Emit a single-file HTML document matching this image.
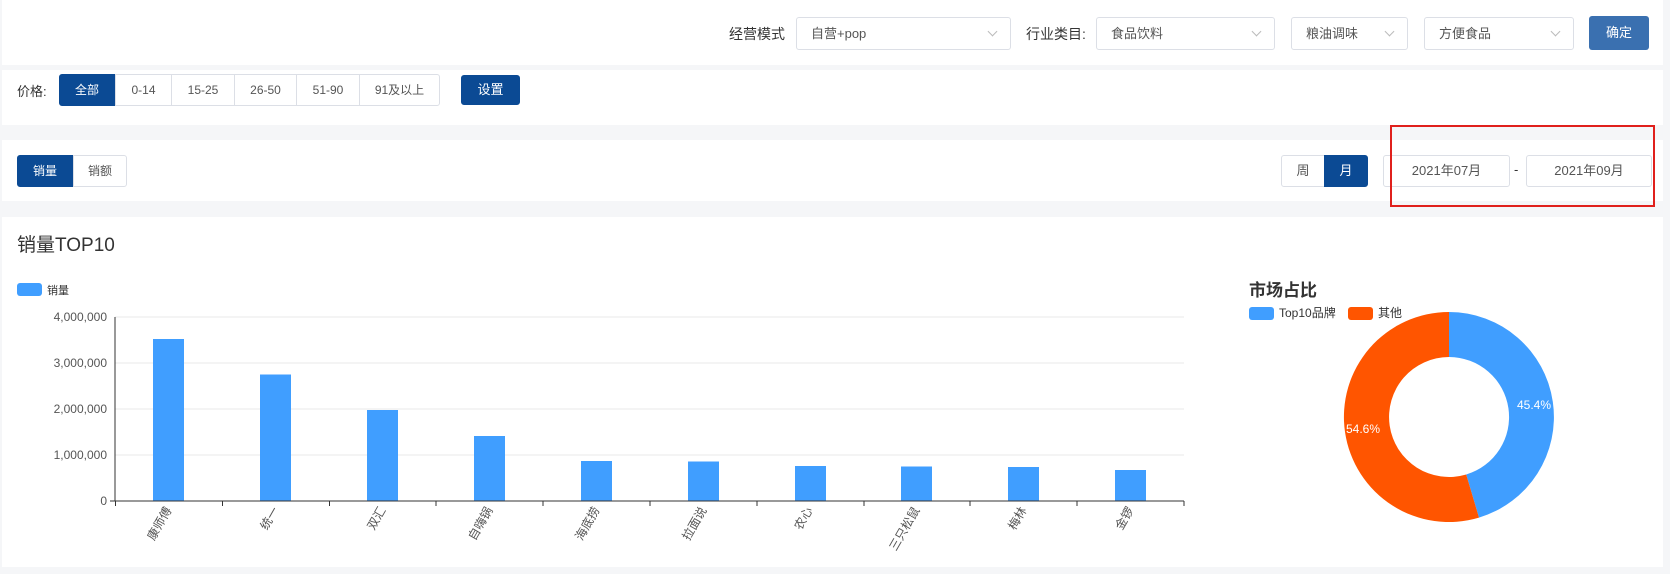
<!DOCTYPE html>
<html><head><meta charset="utf-8"><style>
*{margin:0;padding:0;box-sizing:border-box}
body{width:1670px;height:574px;background:#f5f6f8;font-family:"Liberation Sans","Noto Sans CJK SC",sans-serif;font-size:13px;color:#333;position:relative;overflow:hidden}
.p{position:absolute;background:#fff;left:2px;width:1661px}
.a{position:absolute}
.sel{position:absolute;border:1px solid #dcdfe6;border-radius:3px;background:#fff;color:#555;font-size:13px;padding-left:14px;line-height:31px;height:33px}
.sel:after{content:"";position:absolute;right:14px;top:10px;width:6px;height:6px;border-right:1px solid #bbb;border-bottom:1px solid #bbb;transform:rotate(45deg)}
.b{position:absolute;border:1px solid #dcdfe6;background:#fff;color:#555;text-align:center;font-size:12px;line-height:30px;height:32px}
.on{background:#0b4a94;border-color:#0b4a94;color:#fff}
</style></head><body>
<div class="p" style="top:0;height:65px"></div>
<div class="p" style="top:70px;height:55px"></div>
<div class="p" style="top:140px;height:61px"></div>
<div class="p" style="top:217px;height:350px"></div>

<div class="a" style="left:729px;top:24px;font-size:14px">经营模式</div>
<div class="sel" style="left:796px;top:17px;width:215px">自营+pop</div>
<div class="a" style="left:1026px;top:24px;font-size:14px">行业类目:</div>
<div class="sel" style="left:1096px;top:17px;width:179px">食品饮料</div>
<div class="sel" style="left:1291px;top:17px;width:117px">粮油调味</div>
<div class="sel" style="left:1424px;top:17px;width:150px">方便食品</div>
<div class="a" style="left:1589px;top:16px;width:60px;height:34px;background:#3a70b0;border-radius:3px;color:#fff;text-align:center;line-height:34px;font-size:13px">确定</div>

<div class="a" style="left:17px;top:81px;font-size:13px">价格:</div>
<div class="b on" style="left:59px;top:74px;width:56px;border-radius:3px 0 0 3px">全部</div>
<div class="b" style="left:115px;top:74px;width:57px">0-14</div>
<div class="b" style="left:171px;top:74px;width:64px">15-25</div>
<div class="b" style="left:234px;top:74px;width:63px">26-50</div>
<div class="b" style="left:296px;top:74px;width:64px">51-90</div>
<div class="b" style="left:359px;top:74px;width:81px;border-radius:0 3px 3px 0">91及以上</div>
<div class="b on" style="left:461px;top:75px;width:59px;height:30px;line-height:28px;border-radius:3px;font-size:13px">设置</div>

<div class="b on" style="left:17px;top:155px;width:56px;border-radius:3px 0 0 3px">销量</div>
<div class="b" style="left:73px;top:155px;width:54px;border-radius:0 3px 3px 0">销额</div>
<div class="b" style="left:1281px;top:155px;width:44px;border-radius:3px 0 0 3px;font-size:13px">周</div>
<div class="b on" style="left:1324px;top:155px;width:44px;border-radius:0 3px 3px 0;font-size:13px">月</div>
<div class="b" style="left:1383px;top:155px;width:127px;border-radius:3px;font-size:13px">2021年07月</div>
<div class="a" style="left:1514px;top:162px">-</div>
<div class="b" style="left:1526px;top:155px;width:126px;border-radius:3px;font-size:13px">2021年09月</div>
<div class="a" style="left:1390px;top:125px;width:265px;height:82px;border:2px solid #e0201c"></div>

<div class="a" style="left:17px;top:230px;font-size:19px;color:#333">销量TOP10</div>
<div class="a" style="left:17px;top:283px;width:25px;height:13px;background:#409eff;border-radius:3px"></div>
<div class="a" style="left:47px;top:282px;font-size:11px">销量</div>

<svg class="a" style="left:0;top:0" width="1670" height="574">
<g stroke="#e8e8e8"><line x1="115" x2="1184" y1="317" y2="317"/><line x1="115" x2="1184" y1="363" y2="363"/><line x1="115" x2="1184" y1="409" y2="409"/><line x1="115" x2="1184" y1="455" y2="455"/></g>
<g font-size="12" fill="#555" text-anchor="end"><text x="107" y="321">4,000,000</text><text x="107" y="367">3,000,000</text><text x="107" y="413">2,000,000</text><text x="107" y="459">1,000,000</text><text x="107" y="505">0</text></g>
<g fill="#409eff">
<rect x="153" y="339" width="31" height="162"/><rect x="260" y="374.5" width="31" height="126.5"/><rect x="367" y="410" width="31" height="91"/><rect x="474" y="436" width="31" height="65"/><rect x="581" y="461" width="31" height="40"/><rect x="688" y="461.5" width="31" height="39.5"/><rect x="795" y="466" width="31" height="35"/><rect x="901" y="466.5" width="31" height="34.5"/><rect x="1008" y="467" width="31" height="34"/><rect x="1115" y="470" width="31" height="31"/>
</g>
<g stroke="#333"><line x1="110" x2="1184" y1="501" y2="501"/><line x1="115" x2="115" y1="317" y2="501"/>
<line x1="115.5" x2="115.5" y1="501" y2="506"/><line x1="222.5" x2="222.5" y1="501" y2="506"/><line x1="329.5" x2="329.5" y1="501" y2="506"/><line x1="436" x2="436" y1="501" y2="506"/><line x1="543" x2="543" y1="501" y2="506"/><line x1="650" x2="650" y1="501" y2="506"/><line x1="757" x2="757" y1="501" y2="506"/><line x1="864" x2="864" y1="501" y2="506"/><line x1="970" x2="970" y1="501" y2="506"/><line x1="1077" x2="1077" y1="501" y2="506"/><line x1="1184" x2="1184" y1="501" y2="506"/></g>
<g font-size="12" fill="#555" text-anchor="end">
<text transform="translate(172,510) rotate(-60)">康师傅</text>
<text transform="translate(279,510) rotate(-60)">统一</text>
<text transform="translate(386,510) rotate(-60)">双汇</text>
<text transform="translate(493,510) rotate(-60)">自嗨锅</text>
<text transform="translate(600,510) rotate(-60)">海底捞</text>
<text transform="translate(707,510) rotate(-60)">拉面说</text>
<text transform="translate(813,510) rotate(-60)">农心</text>
<text transform="translate(920,510) rotate(-60)">三只松鼠</text>
<text transform="translate(1027,510) rotate(-60)">梅林</text>
<text transform="translate(1134,510) rotate(-60)">金锣</text>
</g>
<text x="1249" y="296" font-size="17" font-weight="bold" fill="#333">市场占比</text>
<rect x="1249" y="307" width="25" height="13" rx="3" fill="#409eff"/><text x="1279" y="317" font-size="12" fill="#333">Top10品牌</text>
<rect x="1348" y="307" width="25" height="13" rx="3" fill="#ff5500"/><text x="1378" y="317" font-size="12" fill="#333">其他</text>
<path d="M1449 312 A105 105 0 0 1 1479 517.6 L1466.2 474.5 A60 60 0 0 0 1449 357 Z" fill="#409eff"/>
<path d="M1479 517.6 A105 105 0 1 1 1449 312 L1449 357 A60 60 0 1 0 1466.2 474.5 Z" fill="#ff5500"/>
<text x="1517" y="409" font-size="12" fill="#fff">45.4%</text>
<text x="1346" y="433" font-size="12" fill="#fff">54.6%</text>
</svg>
</body></html>
